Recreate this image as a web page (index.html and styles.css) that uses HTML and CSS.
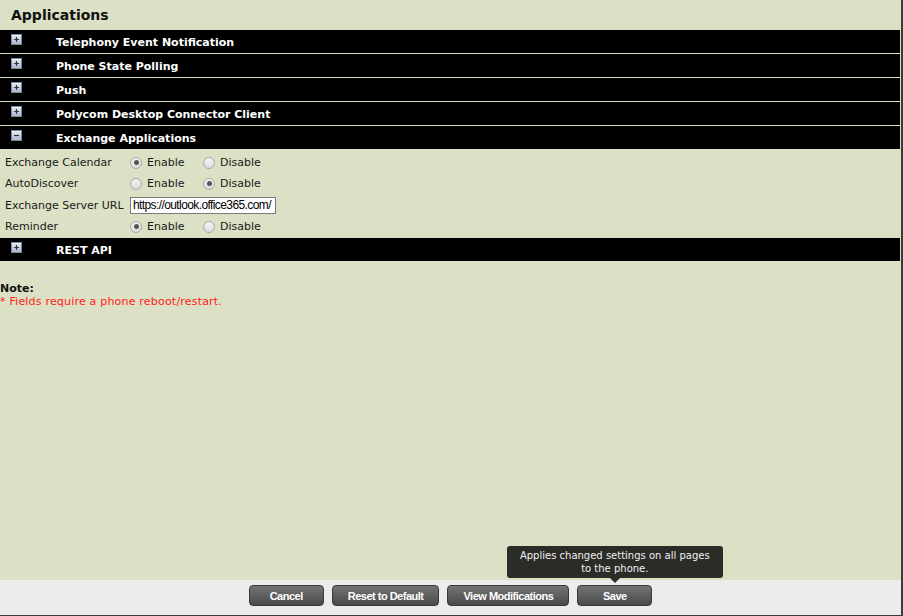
FILE: index.html
```html
<!DOCTYPE html>
<html lang="en">
<head>
    <meta charset="UTF-8">
    <title>Applications</title>
    <link rel="stylesheet" href="styles.css">
</head>
<body>

<div class="page">
    <div class="content">
        <h1 class="page-title">Applications</h1>

        <div class="group-bar">
            <svg class="toggle" viewBox="0 0 11 11"><defs><linearGradient id="tg" x1="0" y1="0" x2="0" y2="1"><stop offset="0" stop-color="#eef1f7"/><stop offset="1" stop-color="#a9b3c8"/></linearGradient></defs><rect x="0.5" y="0.5" width="10" height="10" fill="url(#tg)" stroke="#7d889e"/><path d="M3 5.5h5M5.5 3v5" stroke="#2a3550" stroke-width="1.2"/></svg>
            <span>Telephony Event Notification</span>
        </div>
        <div class="group-bar">
            <svg class="toggle" viewBox="0 0 11 11"><rect x="0.5" y="0.5" width="10" height="10" fill="url(#tg)" stroke="#7d889e"/><path d="M3 5.5h5M5.5 3v5" stroke="#2a3550" stroke-width="1.2"/></svg>
            <span>Phone State Polling</span>
        </div>
        <div class="group-bar">
            <svg class="toggle" viewBox="0 0 11 11"><rect x="0.5" y="0.5" width="10" height="10" fill="url(#tg)" stroke="#7d889e"/><path d="M3 5.5h5M5.5 3v5" stroke="#2a3550" stroke-width="1.2"/></svg>
            <span>Push</span>
        </div>
        <div class="group-bar">
            <svg class="toggle" viewBox="0 0 11 11"><rect x="0.5" y="0.5" width="10" height="10" fill="url(#tg)" stroke="#7d889e"/><path d="M3 5.5h5M5.5 3v5" stroke="#2a3550" stroke-width="1.2"/></svg>
            <span>Polycom Desktop Connector Client</span>
        </div>
        <div class="group-bar">
            <svg class="toggle" viewBox="0 0 11 11"><rect x="0.5" y="0.5" width="10" height="10" fill="url(#tg)" stroke="#7d889e"/><path d="M3 5.5h5" stroke="#2a3550" stroke-width="1.2"/></svg>
            <span>Exchange Applications</span>
        </div>

        <!-- 펼쳐진 그룹 -->
        <div class="group-body">
            <div class="field-label">Exchange Calendar</div>
            <div class="field-value">
                <label class="opt"><input type="radio" name="cal" checked> Enable</label>
                <label class="opt"><input type="radio" name="cal"> Disable</label>
            </div>

            <div class="field-label">AutoDiscover</div>
            <div class="field-value">
                <label class="opt"><input type="radio" name="auto"> Enable</label>
                <label class="opt"><input type="radio" name="auto" checked> Disable</label>
            </div>

            <div class="field-label url-label">Exchange Server URL</div>
            <div class="field-value url-row">
                <input class="text-input" type="text" value="https://outlook.office365.com/">
            </div>

            <div class="field-label">Reminder</div>
            <div class="field-value">
                <label class="opt"><input type="radio" name="rem" checked> Enable</label>
                <label class="opt"><input type="radio" name="rem"> Disable</label>
            </div>
        </div>

        <div class="group-bar">
            <svg class="toggle" viewBox="0 0 11 11"><rect x="0.5" y="0.5" width="10" height="10" fill="url(#tg)" stroke="#7d889e"/><path d="M3 5.5h5M5.5 3v5" stroke="#2a3550" stroke-width="1.2"/></svg>
            <span>REST API</span>
        </div>

        <div class="note">
            <div class="note-title">Note:</div>
            <div class="note-text">* Fields require a phone reboot/restart.</div>
        </div>
    </div>

    <div class="footer">
        <div class="button">Cancel</div>
        <div class="button">Reset to Default</div>
        <div class="button">View Modifications</div>
        <div class="button save">Save
            <div class="tooltip">Applies changed settings on all pages<br>to the phone.</div>
        </div>
    </div>
</div>

</body>
</html>
```

FILE: styles.css
```css
html, body {
    margin: 0;
    padding: 0;
    height: 100%;
}
body {
    font-family: "DejaVu Sans", Verdana, sans-serif;
    background-color: #dce1c5;
}
.page {
    display: flex;
    flex-direction: column;
    height: 100vh;
    box-sizing: border-box;
    border-right: 2px solid #3c3c3c;
    border-bottom: 1px solid #3c3c3c;
}
.content {
    flex: 1;
    padding-right: 1px;
}
.page-title {
    margin: 0;
    padding: 5px 11px;
    font-size: 14px;
    line-height: 20px;
    color: #111;
}
.group-bar {
    display: flex;
    align-items: center;
    height: 23px;
    box-sizing: border-box;
    padding-top: 2px;
    margin-bottom: 1px;
    background-color: #000;
    color: #fff;
    font-size: 11px;
    font-weight: bold;
}
.group-bar .toggle {
    width: 11px;
    height: 11px;
    margin: 0 34px 0 11px;
    position: relative;
    top: -3px;
}
.group-body {
    display: grid;
    grid-template-columns: 125px auto;
    padding: 2px 0 1px 5px;
    font-size: 11px;
    color: #1a1a1a;
}
.field-label, .field-value {
    height: 21px;
    display: flex;
    align-items: center;
}
.url-label, .url-row {
    height: 22px;
}
.opt {
    display: flex;
    align-items: center;
    width: 73px;
}
.opt input {
    appearance: none;
    -webkit-appearance: none;
    width: 12px;
    height: 12px;
    margin: 0 5px 0 0;
    border: 1px solid #a7a7a7;
    border-radius: 50%;
    background: linear-gradient(#f4f4f4, #dcdcdc);
    box-sizing: border-box;
    position: relative;
}
.opt input:checked::after {
    content: "";
    position: absolute;
    left: 2.5px;
    top: 2.5px;
    width: 5px;
    height: 5px;
    border-radius: 50%;
    background-color: #555;
}
.text-input {
    width: 146px;
    height: 17px;
    box-sizing: border-box;
    margin: 0;
    padding: 0 0 0 2px;
    border: 1px solid #7a7a7a;
    font-family: "Liberation Sans", Arial, sans-serif;
    font-size: 12px;
    letter-spacing: -0.6px;
    color: #000;
    background: #fff;
}
.note {
    margin-top: 21px;
    font-size: 11px;
    line-height: 13px;
}
.note-title {
    font-weight: bold;
    color: #111;
}
.note-text {
    color: #ff1a1a;
    letter-spacing: 0.2px;
}
.footer {
    display: flex;
    justify-content: center;
    align-items: flex-start;
    gap: 8px;
    height: 35px;
    box-sizing: border-box;
    padding-top: 5px;
    background-color: #ececec;
}
.button {
    height: 21px;
    min-width: 75px;
    box-sizing: border-box;
    padding: 0 15px;
    display: flex;
    align-items: center;
    justify-content: center;
    border: 1px solid #3a3a3a;
    border-radius: 4px;
    background: linear-gradient(#737373, #4a4a4a);
    color: #fff;
    font-family: "Liberation Sans", Arial, sans-serif;
    font-size: 11px;
    font-weight: bold;
    letter-spacing: -0.5px;
    cursor: pointer;
}
.save {
    position: relative;
}
.tooltip {
    position: absolute;
    bottom: 27px;
    left: 50%;
    transform: translateX(-50%);
    width: 216px;
    box-sizing: border-box;
    padding: 3px 0;
    border-radius: 3px;
    background-color: #2b2b28;
    color: #f0f0f0;
    font-family: "DejaVu Sans", Verdana, sans-serif;
    font-size: 10px;
    font-weight: normal;
    letter-spacing: 0;
    line-height: 13px;
    text-align: center;
}
.tooltip::after {
    content: "";
    position: absolute;
    left: 50%;
    bottom: -5px;
    margin-left: -5px;
    border-left: 5px solid transparent;
    border-right: 5px solid transparent;
    border-top: 5px solid #2b2b28;
}
```
